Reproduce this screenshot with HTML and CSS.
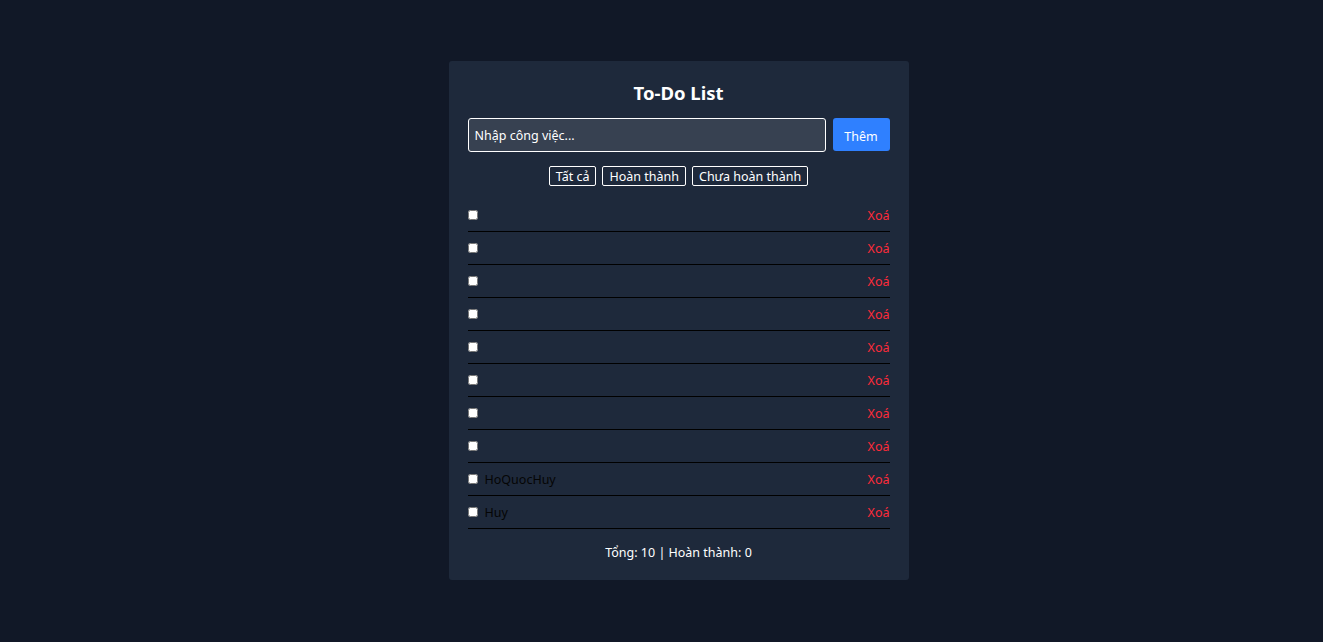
FILE: index.html
```html
<!DOCTYPE html>
<html lang="vi">
<head>
<meta charset="utf-8">
<title>To-Do List</title>
<link rel="stylesheet" href="styles.css">
</head>
<body>
<div class="card">
  <h1 class="title">To-Do List</h1>
  <div class="add-row">
    <input class="task-input" type="text" placeholder="Nhập công việc...">
    <button class="add-btn">Thêm</button>
  </div>
  <div class="filters">
    <button class="filter">Tất cả</button>
    <button class="filter">Hoàn thành</button>
    <button class="filter">Chưa hoàn thành</button>
  </div>
  <ul class="list">
    <li class="item"><label class="item-left"><input type="checkbox" class="check"><span class="text"></span></label><button class="del">Xoá</button></li>
    <li class="item"><label class="item-left"><input type="checkbox" class="check"><span class="text"></span></label><button class="del">Xoá</button></li>
    <li class="item"><label class="item-left"><input type="checkbox" class="check"><span class="text"></span></label><button class="del">Xoá</button></li>
    <li class="item"><label class="item-left"><input type="checkbox" class="check"><span class="text"></span></label><button class="del">Xoá</button></li>
    <li class="item"><label class="item-left"><input type="checkbox" class="check"><span class="text"></span></label><button class="del">Xoá</button></li>
    <li class="item"><label class="item-left"><input type="checkbox" class="check"><span class="text"></span></label><button class="del">Xoá</button></li>
    <li class="item"><label class="item-left"><input type="checkbox" class="check"><span class="text"></span></label><button class="del">Xoá</button></li>
    <li class="item"><label class="item-left"><input type="checkbox" class="check"><span class="text"></span></label><button class="del">Xoá</button></li>
    <li class="item"><label class="item-left"><input type="checkbox" class="check"><span class="text">HoQuocHuy</span></label><button class="del">Xoá</button></li>
    <li class="item"><label class="item-left"><input type="checkbox" class="check"><span class="text">Huy</span></label><button class="del">Xoá</button></li>
  </ul>
  <p class="summary">Tổng: 10 | Hoàn thành: 0</p>
</div>
</body>
</html>
```
FILE: styles.css
```css
* { box-sizing: border-box; }
html, body { margin: 0; height: 100%; }
body {
  background: #111827;
  font-family: "Noto Sans", "Open Sans", sans-serif;
  color: #fff;
  display: flex;
  justify-content: center;
  align-items: flex-start;
  padding: 61px 0 0 34px;
}
.card {
  width: 460px;
  background: #1e293b;
  border-radius: 3px;
  padding: 20px 19px 18px;
}
.title {
  margin: 0 0 13px;
  font-size: 18.5px;
  font-weight: 700;
  text-align: center;
  line-height: 24px;
}
.add-row {
  display: flex;
  gap: 7px;
}
.task-input {
  flex: 1;
  height: 34px;
  background: #374151;
  border: 1px solid #fff;
  border-radius: 3px;
  color: #fff;
  font: 12.5px "Noto Sans", sans-serif;
  padding: 0 6px;
  outline: none;
}
.task-input::placeholder { color: #fff; opacity: 1; }
.add-btn {
  width: 57px;
  height: 33px;
  background: #2f80ff;
  border: none;
  border-radius: 3px;
  color: #fff;
  font: 12.5px "Noto Sans", sans-serif;
  padding: 3px 0 0;
}
.filters {
  display: flex;
  justify-content: center;
  gap: 6px;
  margin-top: 14px;
}
.filter {
  height: 20px;
  background: transparent;
  border: 1px solid #fff;
  border-radius: 2px;
  color: #fff;
  font: 12.5px "Noto Sans", sans-serif;
  padding: 1px 6px 0;
  line-height: 17px;
}
.list {
  list-style: none;
  margin: 13px 0 0;
  padding: 0;
}
.item {
  display: flex;
  justify-content: space-between;
  align-items: center;
  height: 33px;
  border-bottom: 1px solid #000;
}
.item-left {
  display: flex;
  align-items: center;
  gap: 7px;
  color: #050505;
  font-size: 12.5px;
}
.check {
  margin: 0;
  width: 10px;
  height: 10px;
  position: relative;
  top: 0;
}
.del {
  background: none;
  border: none;
  padding: 0;
  color: #ff2b3a;
  font: 12.5px "Noto Sans", sans-serif;
}
.summary {
  margin: 15px 0 0;
  text-align: center;
  font-size: 12.5px;
  line-height: 18px;
}
```
